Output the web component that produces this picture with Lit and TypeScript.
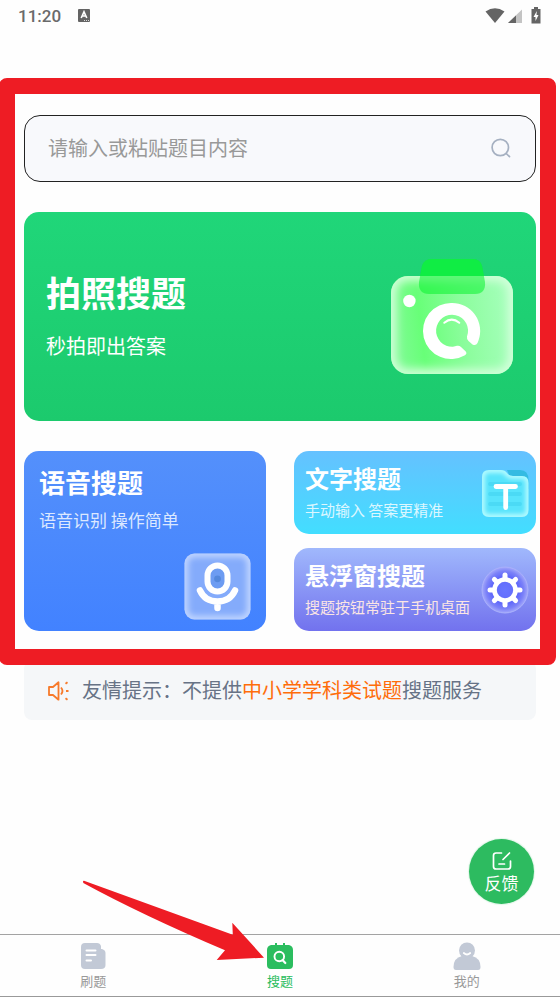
import { LitElement, html, css, svg } from "lit";
import { customElement, state } from "lit/decorators.js";
import { classMap } from "lit/directives/class-map.js";

const cameraIcon = html`<svg class="camera" viewBox="0 0 124 118" aria-hidden="true">
  <defs>
    <linearGradient id="cam-body" x1="0" x2="1" y1="0.1" y2="0">
      <stop offset="0" stop-color="#7dfb92" /><stop offset="0.2" stop-color="#68ff78" />
      <stop offset="0.55" stop-color="#8cfd9d" /><stop offset="1" stop-color="#a9ffc0" />
    </linearGradient>
    <clipPath id="cam-clip"><rect x="1" y="18" width="122" height="98" rx="17" /></clipPath>
    <filter id="cam-blur" x="-20%" y="-20%" width="140%" height="140%"><feGaussianBlur stdDeviation="5" /></filter>
  </defs>
  <rect x="1" y="18" width="122" height="98" rx="17" fill="url(#cam-body)" />
  <g clip-path="url(#cam-clip)">
    <rect x="0" y="17" width="124" height="100" rx="17" fill="none" stroke="#d4ffdc" stroke-width="12" filter="url(#cam-blur)" />
  </g>
  <path d="M42 1H83Q90 1 92 8L95 24Q96 36 85 36H39Q28 36 29 24L32 8Q34 1 42 1Z" fill="#08f22e" fill-opacity="0.55" />
  <path d="M42 1H83Q90 1 92 8L94 18H30L32 8Q34 1 42 1Z" fill="#10ee43" fill-opacity="0.85" />
  <circle cx="19.400" cy="43" r="6.200" fill="#fff" />
  <path d="M62 45A28 28 0 0 1 88.500 82.500L87.500 85Q86 88 82.500 86.500L78.500 83Q76.500 81 77 78.500A16 16 0 1 0 63 88.700L67 87.800Q69.300 87.300 71 89L75.500 93.200Q77.500 95.500 75 97.200A28 28 0 1 1 62 45Z" fill="#fff" />
  <path d="M54.300 64.800Q61.700 58.500 69.300 64.800" fill="none" stroke="#fff" stroke-width="2" stroke-linecap="round" />
</svg>`;

const micIcon = html`<svg class="mic" viewBox="0 0 67 67" aria-hidden="true">
  <defs>
    <clipPath id="mic-clip"><rect x="0.500" y="0.500" width="66" height="66" rx="10" /></clipPath>
    <filter id="mic-blur" x="-20%" y="-20%" width="140%" height="140%"><feGaussianBlur stdDeviation="3" /></filter>
  </defs>
  <rect x="0.500" y="0.500" width="66" height="66" rx="10" fill="#84abfb" />
  <g clip-path="url(#mic-clip)">
    <rect width="67" height="67" rx="10" fill="none" stroke="#c4d8ff" stroke-width="8" filter="url(#mic-blur)" />
  </g>
  <rect x="23.500" y="12.500" width="20" height="26" rx="10" fill="#6d9cf2" stroke="#fff" stroke-width="6" />
  <circle cx="33.500" cy="25.800" r="3.400" fill="#5488dc" />
  <path d="M16 37.500Q21 48.500 33.500 48.500T51 37.500M33.500 49V55" fill="none" stroke="#fff" stroke-width="6.500" stroke-linecap="round" />
</svg>`;

const folderIcon = html`<svg class="small-icon" viewBox="0 0 48 48" aria-hidden="true">
  <defs>
    <clipPath id="fold-clip"><path d="M8 1H20Q24 1 26 4Q28 7 32 7H41Q47.500 7 47.500 14V41Q47.500 48 41 48H8Q1 48 1 41V8Q1 1 8 1Z" /></clipPath>
    <filter id="fold-blur" x="-20%" y="-20%" width="140%" height="140%"><feGaussianBlur stdDeviation="2" /></filter>
  </defs>
  <path d="M26 1H39Q47.500 1 47.500 11V20H34Z" fill="#34bbe2" />
  <path d="M8 1H20Q24 1 26 4Q28 7 32 7H41Q47.500 7 47.500 14V41Q47.500 48 41 48H8Q1 48 1 41V8Q1 1 8 1Z" fill="#58e4fc" />
  <g stroke="#4bdaf5" stroke-width="4" stroke-linecap="round"><path d="M9 15H39M9 25H39M9 35H39" /></g>
  <g clip-path="url(#fold-clip)">
    <path d="M8 1H20Q24 1 26 4Q28 7 32 7H41Q47.500 7 47.500 14V41Q47.500 48 41 48H8Q1 48 1 41V8Q1 1 8 1Z" fill="none" stroke="#b5fbff" stroke-width="6" filter="url(#fold-blur)" />
  </g>
  <path d="M15 17.500H34.500M24.700 18V38.500" fill="none" stroke="#fff" stroke-width="4.800" stroke-linecap="round" />
</svg>`;

const gearIcon = html`<svg class="small-icon" viewBox="0 0 48 48" aria-hidden="true">
  <defs>
    <radialGradient id="gear-bg">
      <stop offset="0" stop-color="#6876ff" /><stop offset="0.6" stop-color="#6169fb" />
      <stop offset="0.82" stop-color="#7c82f8" /><stop offset="1" stop-color="#a3a8fb" />
    </radialGradient>
  </defs>
  <circle cx="24" cy="24" r="23" fill="url(#gear-bg)" stroke="#a9b0fb" />
  <circle cx="24" cy="24" r="10.500" fill="none" stroke="#fff" stroke-width="4.600" />
  <g stroke="#fff" stroke-width="5" stroke-linecap="round">
    ${[0, 45, 90, 135, 180, 225, 270, 315].map(
      (a) => svg`<path d="M24 11.500V9" transform="rotate(${a} 24 24)" />`
    )}
  </g>
</svg>`;

const tabs = [
  {
    id: "practice",
    label: "刷题",
    icon: html`<svg class="tab-icon" viewBox="0 0 28 28" aria-hidden="true">
      <path d="M6 1H18Q21 1 22 4V7H23Q26.500 8 26.500 11V23Q26.500 27 22 27H6Q2 27 2 23V5Q2 1 6 1Z" fill="#c2c9d6" />
      <path d="M7.500 8.500H16.500M7.500 13H16.500M7.500 18.500H12" stroke="#fff" stroke-width="2" stroke-linecap="round" />
    </svg>`,
  },
  {
    id: "search",
    label: "搜题",
    icon: html`<svg class="tab-icon" viewBox="0 0 28 28" aria-hidden="true">
      <path d="M9 1H11V3H17V1H19V3H23Q27 4 27 8V23Q27 27 23 27H5Q1 27 1 23V8Q1 4 5 3H9Z" fill="#2bbd5f" />
      <circle cx="13.300" cy="14.500" r="4.800" fill="none" stroke="#fff" stroke-width="1.900" />
      <path d="M16.500 18L19.300 21" stroke="#fff" stroke-width="2.200" stroke-linecap="round" />
    </svg>`,
  },
  {
    id: "mine",
    label: "我的",
    icon: html`<svg class="tab-icon" viewBox="0 0 28 28" aria-hidden="true">
      <circle cx="14" cy="8.500" r="8" fill="#c2c9d6" />
      <path d="M0.500 25Q0.500 16 9 14H19Q27.500 16 27.500 25Q27.500 28 25 28H3Q0.500 28 0.500 25Z" fill="#c2c9d6" />
      <path d="M10.800 11Q14 14 17.200 11" fill="none" stroke="#fff" stroke-width="1.800" stroke-linecap="round" />
    </svg>`,
  },
];

@customElement("app-root")
export class AppRoot extends LitElement {
  @state() private active = "search";

  static styles = css`
    :host {
      display: flex;
      flex-direction: column;
      position: relative;
      min-height: 100vh;
      background: #fefefe;
      font-family: "Noto Sans CJK SC", sans-serif;
    }
    * { box-sizing: border-box; }
    svg { display: block; flex: none; }
    button { font: inherit; border: 0; margin: 0; cursor: pointer; }
    .status {
      display: flex;
      align-items: center;
      gap: 17px;
      height: 31px;
      padding: 0 18px;
      color: #6a6a6a;
      font: 500 17px/20px Roboto, sans-serif;
    }
    .signals { display: flex; margin-left: auto; }
    main { flex: 1; padding-top: 47px; }
    .tools {
      position: relative;
      display: flex;
      flex-direction: column;
      gap: 30px;
      padding: 37px 24px 34px;
    }
    .frame {
      position: absolute;
      inset: 0 4px 0 -1px;
      border: 16px solid #ee1c24;
      border-radius: 8px;
      pointer-events: none;
      z-index: 2;
    }
    .search {
      display: flex;
      align-items: center;
      height: 67px;
      padding: 0 24px 2px 23px;
      border: 1px solid #222;
      border-radius: 16px;
      background: #f8f9fc;
    }
    .search input {
      flex: 1;
      min-width: 0;
      padding: 0;
      border: 0;
      outline: 0;
      background: none;
      color: #333;
      font: 20px/30px "Noto Sans CJK SC", sans-serif;
    }
    .search input::placeholder { color: #999; opacity: 1; }
    .search button { padding: 0; background: none; }
    .card {
      display: flex;
      color: #fff;
      text-align: left;
      border-radius: 15px;
      white-space: nowrap;
    }
    .text { display: flex; flex-direction: column; }
    .title { font-weight: 700; }
    .hero {
      align-items: center;
      justify-content: space-between;
      height: 209px;
      padding: 0 22px;
      background: linear-gradient(#20d679, #1cca6d);
    }
    .hero .text { gap: 14px; padding-bottom: 4px; }
    .hero .title { font-size: 35px; line-height: 48px; }
    .hero .note { font-size: 20px; line-height: 32px; }
    .camera { width: 124px; height: 118px; }
    .grid {
      display: grid;
      grid-template-columns: 1fr 1fr;
      gap: 28px;
      height: 180px;
    }
    .stack { display: grid; grid-template-rows: 1fr 1fr; gap: 14px; }
    .voice {
      flex-direction: column;
      justify-content: space-between;
      padding: 15px 15px 11px;
      background: linear-gradient(#5490fb, #4282ff);
    }
    .voice .text { gap: 8px; }
    .voice .title { font-size: 26px; line-height: 32px; }
    .voice .note { font-size: 17px; line-height: 28px; color: #dce8ff; }
    .mic { width: 67px; height: 67px; align-self: flex-end; }
    .mini {
      align-items: center;
      justify-content: space-between;
      padding: 0 7px 0 11px;
    }
    .mini .text { gap: 6px; padding-bottom: 4px; }
    .mini .title { font-size: 24px; line-height: 32px; }
    .mini .note { font-size: 15px; line-height: 20px; }
    .small-icon { width: 48px; height: 48px; }
    .typed { background: linear-gradient(#65c1ff, #42deff); }
    .typed .note { color: #dcf7ff; }
    .floating { background: linear-gradient(#a0b8fc, #7272ee); }
    .floating .note { color: #fbe5e4; }
    .tip {
      display: flex;
      align-items: center;
      gap: 12px;
      height: 59px;
      margin: -4px 24px 0;
      padding: 0 24px;
      border-radius: 8px;
      background: #f5f7f9;
      color: #677386;
      font-size: 20px;
      line-height: 30px;
    }
    .tip p { margin: 0; padding-bottom: 2px; }
    .tip em { font-style: normal; color: #ff6d0a; }
    .feedback {
      position: absolute;
      right: 26px;
      bottom: 93px;
      display: flex;
      flex-direction: column;
      align-items: center;
      width: 65px;
      height: 65px;
      padding: 12px 0 0;
      border-radius: 50%;
      background: #2dbb60;
      box-shadow: 0 0 1px 1px #e2f6e9;
      color: #fff;
      font-size: 17px;
      line-height: 24px;
    }
    .tabs {
      position: relative;
      display: grid;
      grid-template-columns: repeat(3, 1fr);
      height: 63px;
      border-top: 1px solid #a3a3a3;
      border-bottom: 1px solid #999;
    }
    .tab {
      display: flex;
      flex-direction: column;
      align-items: center;
      gap: 2px;
      padding: 7px 0 0;
      background: none;
      color: #999;
      font-size: 13px;
      line-height: 18px;
    }
    .tab.active { color: #2bbd5f; }
    .tab-icon { width: 28px; height: 28px; }
    .arrow {
      position: absolute;
      left: calc(50% - 198px);
      bottom: 34px;
      width: 184px;
      height: 82px;
      pointer-events: none;
    }
  `;

  render() {
    return html`
      <header class="status">
        <span>11:20</span>
        <svg width="12" height="13" viewBox="0 0 12 13" aria-hidden="true">
          <rect width="12" height="13" rx="1" fill="#646464" />
          <path d="M3.200 9L6 2.800L8.800 9M4.200 7H7.800" fill="none" stroke="#fff" stroke-width="1.600" />
          <path d="M6 11.500H11" stroke="#ddd" stroke-dasharray="1 1" />
        </svg>
        <svg class="signals" width="57" height="18" viewBox="0 0 57 18" aria-hidden="true">
          <path d="M0.500 4.500Q10 -1.800 19.500 4.500L10 16Z" fill="#646464" />
          <path d="M23 16L37 2.500V16Z" fill="#c4c4c4" /><path d="M23 16L31 8.500V16Z" fill="#646464" />
          <path d="M47 2H49V0H53V2H55.500V16.500H46.500V2Z" fill="#646464" />
          <path d="M51.800 4L48.500 10H50.500V14L53.500 8H51.500Z" fill="#fff" />
        </svg>
      </header>
      <main>
        <section class="tools">
          <form class="search" role="search" @submit=${(e: Event) => e.preventDefault()}>
            <input type="text" placeholder="请输入或粘贴题目内容" aria-label="请输入或粘贴题目内容" />
            <button aria-label="搜题">
              <svg width="20" height="20" viewBox="0 0 20 20" fill="none" stroke="#a5b0c1" stroke-width="1.700" stroke-linecap="round">
                <circle cx="9.300" cy="9.500" r="8.200" /><path d="M15.200 15.500L18.500 18.700" />
              </svg>
            </button>
          </form>
          <button class="card hero">
            <span class="text"><span class="title">拍照搜题</span><span class="note">秒拍即出答案</span></span>
            ${cameraIcon}
          </button>
          <div class="grid">
            <button class="card voice">
              <span class="text"><span class="title">语音搜题</span><span class="note">语音识别 操作简单</span></span>
              ${micIcon}
            </button>
            <div class="stack">
              <button class="card mini typed">
                <span class="text"><span class="title">文字搜题</span><span class="note">手动输入 答案更精准</span></span>
                ${folderIcon}
              </button>
              <button class="card mini floating">
                <span class="text"><span class="title">悬浮窗搜题</span><span class="note">搜题按钮常驻于手机桌面</span></span>
                ${gearIcon}
              </button>
            </div>
          </div>
          <div class="frame"></div>
        </section>
        <div class="tip">
          <svg width="22" height="20" viewBox="0 0 22 20" fill="none" stroke="#f77a2b" stroke-width="1.800" aria-hidden="true">
            <path d="M1 6H5L10.500 1.300V18.700L5 14H1Z" stroke-linejoin="round" />
            <path d="M13 6.500Q16 10 13 13.500" />
            <path d="M17.500 2.800L19.500 1.300M18 10H20.500M17.500 17.200L19.500 18.700" />
          </svg>
          <p>友情提示：不提供<em>中小学学科类试题</em>搜题服务</p>
        </div>
      </main>
      <button class="feedback">
        <svg width="20" height="20" viewBox="0 0 20 20" fill="none" stroke="#fff" stroke-width="1.700" stroke-linecap="round" aria-hidden="true">
          <path d="M9.500 2H4Q1.500 2 1.500 4.500V15.500Q1.500 18 4 18H16Q18.500 18 18.500 15.500V10" />
          <path d="M11 8.500L17.500 2M7 13H12.500" />
        </svg>
        <span>反馈</span>
      </button>
      <nav class="tabs">
        ${tabs.map(
          (t) => html`<button
            class=${classMap({ tab: true, active: t.id === this.active })}
            @click=${() => (this.active = t.id)}
          >${t.icon}<span>${t.label}</span></button>`
        )}
        <svg class="arrow" viewBox="0 0 184 82" aria-hidden="true">
          <path d="M1 1L2 0.800L150.800 54.700L150.300 42.700L182 77.700L134.700 80L143 70.300Q60 35 1.300 3Z" fill="#ee1c24" />
        </svg>
      </nav>
    `;
  }
}
